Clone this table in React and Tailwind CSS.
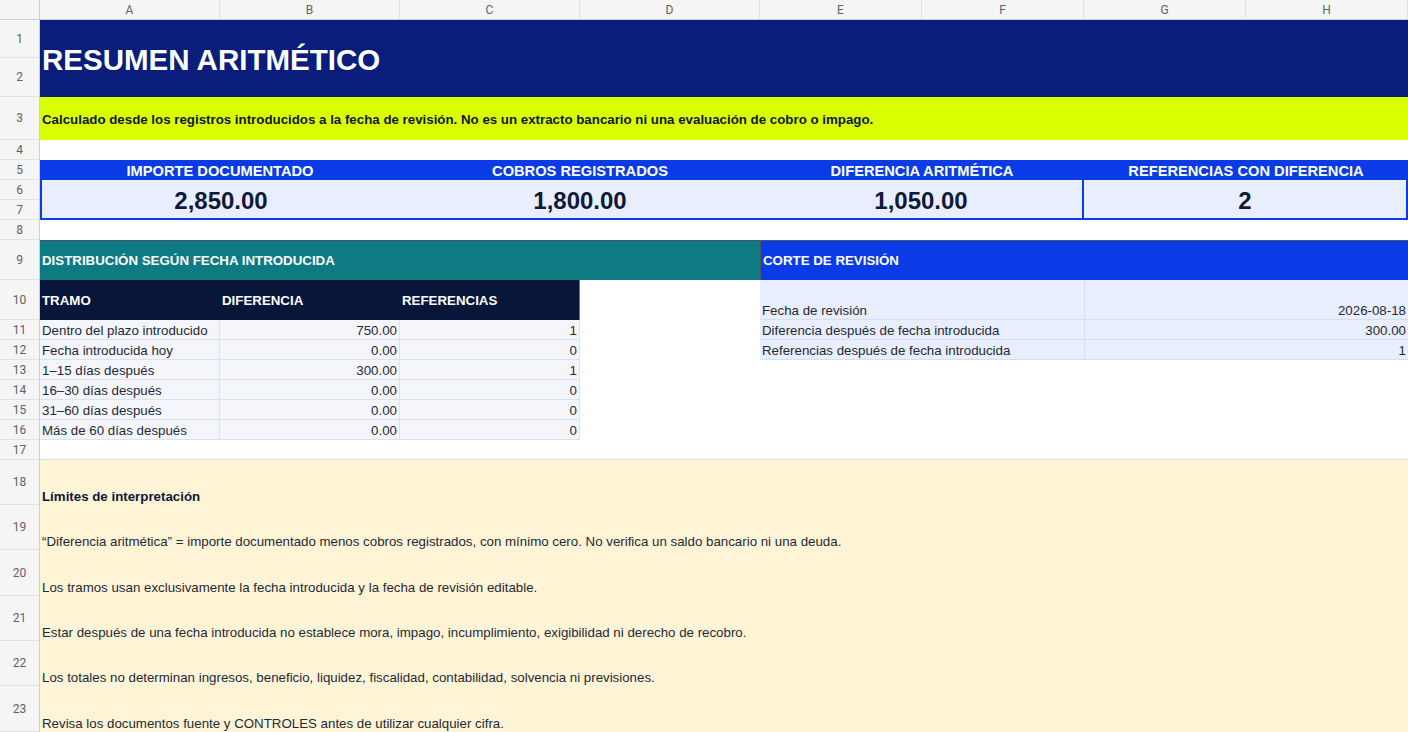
import React from "react";

const columnas = ["A", "B", "C", "D", "E", "F", "G", "H"];

const tramos = [
  ["Dentro del plazo introducido", "750.00", "1"],
  ["Fecha introducida hoy", "0.00", "0"],
  ["1–15 días después", "300.00", "1"],
  ["16–30 días después", "0.00", "0"],
  ["31–60 días después", "0.00", "0"],
  ["Más de 60 días después", "0.00", "0"],
];

const corte = [
  ["Fecha de revisión", "2026-08-18"],
  ["Diferencia después de fecha introducida", "300.00"],
  ["Referencias después de fecha introducida", "1"],
];

const kpis = [
  ["IMPORTE DOCUMENTADO", "2,850.00"],
  ["COBROS REGISTRADOS", "1,800.00"],
  ["DIFERENCIA ARITMÉTICA", "1,050.00"],
  ["REFERENCIAS CON DIFERENCIA", "2"],
];

const limites = [
  "“Diferencia aritmética” = importe documentado menos cobros registrados, con mínimo cero. No verifica un saldo bancario ni una deuda.",
  "Los tramos usan exclusivamente la fecha introducida y la fecha de revisión editable.",
  "Estar después de una fecha introducida no establece mora, impago, incumplimiento, exigibilidad ni derecho de recobro.",
  "Los totales no determinan ingresos, beneficio, liquidez, fiscalidad, contabilidad, solvencia ni previsiones.",
  "Revisa los documentos fuente y CONTROLES antes de utilizar cualquier cifra.",
];

const Num = ({ n }) => (
  <div className="flex items-center justify-center bg-[#f5f5f5] border-b border-r border-b-[#e1e1e1] border-r-[#cfcfcf] text-[12px] text-[#5f6368] font-['Roboto',sans-serif]">
    {n}
  </div>
);

const App = () => {
  return (
    <div className="w-[1408px] h-[732px] overflow-hidden bg-white font-['Liberation_Sans',Arial,sans-serif]">
      <div className="grid grid-cols-[40px_180px_180px_180px_180px_162px_162px_162px_162px] grid-rows-[20px_38px_39px_43px_20px_20px_20px_20px_20px_40px_40px_20px_20px_20px_20px_20px_20px_20px_45px_45px_46px_45px_45px_46px]">
        {/* cabecera de columnas */}
        <div className="bg-[#f5f5f5] border-b border-r border-[#cfcfcf]" />
        {columnas.map((c) => (
          <div
            key={c}
            className="flex items-center justify-center bg-[#f5f5f5] border-b border-r border-b-[#cfcfcf] border-r-[#e1e1e1] text-[12px] text-[#5f6368] font-['Roboto',sans-serif]"
          >
            {c}
          </div>
        ))}

        {/* filas 1-2 */}
        <Num n={1} />
        <div className="col-span-8 row-span-2 flex items-center bg-[#0a1d7b] pl-[2px] pt-[4px] text-[29.5px] font-bold text-white">
          RESUMEN ARITMÉTICO
        </div>
        <Num n={2} />

        {/* fila 3 */}
        <Num n={3} />
        <div className="col-span-8 flex items-center bg-[#d9ff00] pl-[2px] pt-[2px] text-[13.3px] font-bold text-[#111827]">
          Calculado desde los registros introducidos a la fecha de revisión. No es un extracto bancario ni una evaluación de cobro o impago.
        </div>

        <Num n={4} />
        <div className="col-span-8" />

        {/* indicadores */}
        <Num n={5} />
        {kpis.map(([label]) => (
          <div
            key={label}
            className="col-span-2 flex items-center justify-center bg-[#0b3be6] pt-[1px] text-[14.67px] font-bold text-white"
          >
            {label}
          </div>
        ))}
        <Num n={6} />
        {kpis.map(([label, valor], i) => (
          <div
            key={label + "v"}
            className={`col-span-2 row-span-2 flex items-center justify-center bg-[#e8eefd] border-b-2 border-[#0b3be6] pt-[3px] text-[24px] font-bold text-[#0f1a3a] ${
              i === 0 ? "border-l-2" : ""
            } ${i >= 2 ? "border-r-2" : ""}`}
          >
            {valor}
          </div>
        ))}
        <Num n={7} />

        <Num n={8} />
        <div className="col-span-8" />

        {/* fila 9 */}
        <Num n={9} />
        <div className="col-span-4 flex items-center bg-[#0e7a82] border-t border-[#4b5563] pl-[2px] text-[13.3px] font-bold text-white">
          DISTRIBUCIÓN SEGÚN FECHA INTRODUCIDA
        </div>
        <div className="col-span-4 flex items-center bg-[#0b3be6] border-t border-l border-[#4b5563] pl-[2px] text-[13.3px] font-bold text-white">
          CORTE DE REVISIÓN
        </div>

        {/* fila 10 */}
        <Num n={10} />
        {["TRAMO", "DIFERENCIA", "REFERENCIAS"].map((h, i) => (
          <div
            key={h}
            className={`flex items-center bg-[#081639] pl-[2px] pt-[1px] text-[13.3px] font-bold text-white ${
              i === 2 ? "border-r border-[#6b7280]" : ""
            }`}
          >
            {h}
          </div>
        ))}
        <div />
        <div className="col-span-2 flex items-end bg-[#e8eefd] border-b border-[#d3ddf6] pl-[2px] text-[13.3px] leading-[16px] text-[#1f2937]">
          {corte[0][0]}
        </div>
        <div className="col-span-2 flex items-end justify-end bg-[#e8eefd] border-b border-l border-[#d3ddf6] pr-[2px] text-[13.3px] leading-[16px] text-[#1f2937]">
          {corte[0][1]}
        </div>

        {/* filas 11-16 */}
        {tramos.map(([tramo, dif, refs], i) => (
          <React.Fragment key={tramo}>
            <Num n={11 + i} />
            <div className="flex items-end bg-[#f4f6fc] border-b border-r border-[#d9e1f5] pl-[2px] text-[13.3px] leading-[16px] text-[#1f2937] whitespace-nowrap">
              {tramo}
            </div>
            <div className="flex items-end justify-end bg-[#f4f6fc] border-b border-r border-[#d9e1f5] pr-[2px] text-[13.3px] leading-[16px] text-[#1f2937]">
              {dif}
            </div>
            <div className="flex items-end justify-end bg-[#f4f6fc] border-b border-r border-[#d9e1f5] pr-[2px] text-[13.3px] leading-[16px] text-[#1f2937]">
              {refs}
            </div>
            {i < 2 ? (
              <>
                <div />
                <div className="col-span-2 flex items-end bg-[#e8eefd] border-b border-[#d3ddf6] pl-[2px] text-[13.3px] leading-[16px] text-[#1f2937] whitespace-nowrap">
                  {corte[i + 1][0]}
                </div>
                <div className="col-span-2 flex items-end justify-end bg-[#e8eefd] border-b border-l border-[#d3ddf6] pr-[2px] text-[13.3px] leading-[16px] text-[#1f2937]">
                  {corte[i + 1][1]}
                </div>
              </>
            ) : (
              <div className="col-span-5" />
            )}
          </React.Fragment>
        ))}

        <Num n={17} />
        <div className="col-span-8 border-b border-[#dde3ee]" />

        {/* límites */}
        <Num n={18} />
        <div className="col-span-8 flex items-end bg-[#fff4d6] pl-[2px] text-[13.3px] leading-[16px] font-bold text-[#0f1a3a]">
          Límites de interpretación
        </div>
        {limites.map((t, i) => (
          <React.Fragment key={i}>
            <Num n={19 + i} />
            <div className="col-span-8 flex items-end bg-[#fff4d6] pl-[2px] text-[13.3px] leading-[16px] text-[#1f2937]">
              {t}
            </div>
          </React.Fragment>
        ))}
      </div>
    </div>
  );
};

export default App;
